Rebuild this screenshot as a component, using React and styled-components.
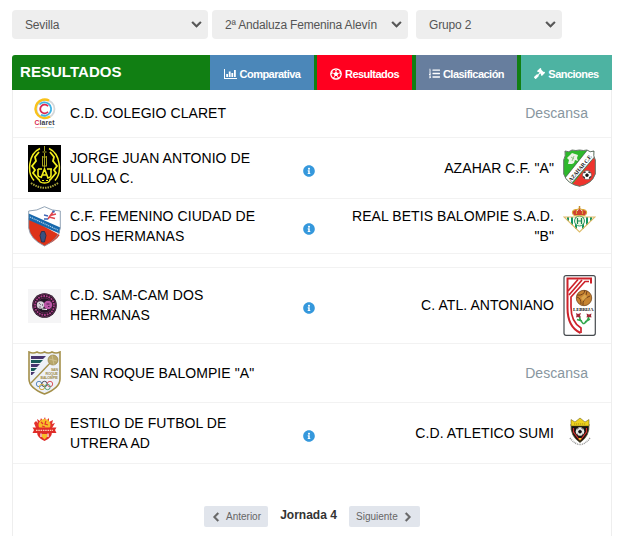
import styled, { createGlobalStyle } from "styled-components";
import {
  FaChevronDown,
  FaChevronLeft,
  FaChevronRight,
  FaGavel,
  FaInfoCircle,
  FaListOl,
} from "react-icons/fa";

const Claret = () => (
  <svg width="33" height="31" viewBox="0 0 33 31">
    <circle cx="17.5" cy="11" r="9" fill="none" stroke="#d5d8da" strokeWidth="1.8" />
    <path
      d="M21 2.5A9.3 9.3 0 1 0 22 18.5"
      fill="none"
      stroke="#f9c21b"
      strokeWidth="2.4"
    />
    <path d="M11.5 6.5A6.7 6.7 0 1 1 13 16.8" fill="none" stroke="#3fb4e5" strokeWidth="1.8" />
    <path d="M20 8.2A4.4 4.4 0 1 0 20 13.8" fill="none" stroke="#d92b51" strokeWidth="1.8" />
    <text x="6.5" y="27" fontSize="6.8" fontWeight="bold" textLength="20" fill="#3c3c46">
      <tspan fill="#d92b51">C</tspan>laret
    </text>
    <path d="M7 29.6h5" stroke="#f3b9c2" />
    <path d="M12 29.6h7" stroke="#f8dc9a" />
    <path d="M19 29.6h7" stroke="#b5d9e9" />
  </svg>
);

const JorgeJuan = () => (
  <svg width="33" height="47" viewBox="0 0 33 47">
    <rect width="33" height="47" fill="#000" />
    <g fill="none" stroke="#f2ee1c">
      <path d="M12 3.500C0 9-1 28 6 35.500M21 3.500c12 5.500 13 24.500 6 32" strokeWidth="1.500" />
      <path
        d="M11 7l-4 5 1 4-4 5 3 4-2 3 6 7M22 7l4 5-1 4 4 5-3 4 2 3-6 7"
        strokeWidth="1.800"
      />
      <path d="M10 24v6q0 2 3 2M10 24h4M23 24v6q0 3-4 3M19 24h5M13 33l3.500-9 3.500 9M14.500 30h4" strokeWidth="1.600" />
      <path d="M11 34q0 4 5.500 4t5.500-4" strokeWidth="1.300" />
    </g>
    <path d="M16.500 1v5M14.500 7h4M14.500 11v10M16.500 8v14M18.500 11v10M14 12h5M14 21h5" stroke="#a9a61f" fill="none" />
    <path d="M14 35.500h2M18 35.500h2" stroke="#f2ee1c" />
    <path
      d="M3 38q13.5 9.500 27 0"
      fill="none"
      stroke="#aaa53a"
      strokeWidth="2"
      strokeDasharray="1.500 1"
    />
  </svg>
);

const DosHermanas = () => (
  <svg width="33" height="41" viewBox="0 0 33 41">
    <path d="M.7 5Q9 5 16.5.7 24 5 32.3 5v17Q31 33 16.5 40 2 33 .7 22z" fill="#fff" />
    <path d="M.7 12l31 17Q28 35 16.5 40 2 33 .7 22z" fill="#dd3319" />
    <path d="M.7 7.500L32.300 21.500 31.500 27.500.7 14z" fill="#1769ad" />
    <path d="M2 11l28 13" stroke="#b4d2eb" strokeWidth="1.200" strokeDasharray="1.200 .8" />
    <path d="M25 6l-3 4-2 3M22 9.500l6-1.500M21 11l6 1.500" stroke="#e0464d" strokeWidth="1.600" fill="none" />
    <path d="M20 10l-4-1M20 13l-4 0" stroke="#3e65b5" strokeWidth="1.300" fill="none" />
    <circle cx="25.500" cy="5.500" r="1.300" fill="#4267b8" />
    <path d="M13.500 25.500h3l1.500 4-1.500 6.500h-3L12 29.500z" fill="#38517f" stroke="#1c2b49" strokeWidth=".8" />
    <path
      d="M.7 5Q9 5 16.5.7 24 5 32.3 5v17Q31 33 16.5 40 2 33 .7 22z"
      fill="none"
      stroke="#8499ad"
      strokeWidth=".9"
    />
  </svg>
);

const SamCam = () => (
  <svg width="33" height="34" viewBox="0 0 33 34">
    <rect width="33" height="34" fill="#f5f5f6" />
    <circle cx="16.500" cy="16.500" r="12.300" fill="#1d1420" />
    <circle cx="16.500" cy="16.500" r="11.500" fill="none" stroke="#74305f" strokeWidth=".8" />
    <circle
      cx="16.500"
      cy="16.500"
      r="9.500"
      fill="none"
      stroke="#b23f8d"
      strokeWidth="1.800"
      strokeDasharray="1.800 .9"
    />
    <circle cx="16.500" cy="16.500" r="7.600" fill="#241727" stroke="#8c3a75" strokeWidth=".6" />
    <circle cx="12.500" cy="16" r="3.700" fill="#d7d3da" />
    <path d="M11 14l2 2M14.500 15v2M11 18h2" stroke="#66606d" strokeWidth=".8" />
    <circle cx="20" cy="16" r="4.200" fill="#bd57a8" />
    <path d="M18.500 15h3M20 17.500h1.500" stroke="#4b2550" />
    <path d="M14 20l5 .5" stroke="#fff" />
  </svg>
);

const SanRoque = () => (
  <svg width="33" height="44" viewBox="0 0 33 44">
    <path
      d="M1 1q4 2 8 0 3.500 2 7.500 0 4 2 7.500 0 4 2 8 0v27q0 9-15.500 15Q1 37 1 28z"
      fill="#eef1f7"
      stroke="#a4904a"
      strokeWidth="1.600"
    />
    <path d="M3 5h15l-3 3H3zM3 13h9l-3 3H3zM3 21h4l-3 3H3z" fill="#48356f" />
    <path d="M3 9h12l-3 3H3zM3 17h6l-3 3H3z" fill="#175c59" />
    <path d="M25 9L3 32" stroke="#a4904a" strokeWidth="1.400" />
    <circle cx="25" cy="9" r="5" fill="#b7a66b" stroke="#958243" strokeWidth=".7" />
    <path d="M21 8l8 2M24 4l2 10" stroke="#d8cda1" strokeWidth=".6" />
    <g fontSize="3.600" fontWeight="bold" fill="#a08b49">
      <text x="23" y="19.500" textLength="7">SAN</text>
      <text x="17.500" y="23.700" textLength="12.500">ROQUE</text>
      <text x="12.500" y="27.900" textLength="17.500">BALOMPIE</text>
    </g>
    <g fill="none" strokeWidth="1">
      <circle cx="11" cy="33" r="2.700" stroke="#5b8abd" />
      <circle cx="16.500" cy="33" r="2.700" stroke="#4e4e57" />
      <circle cx="22" cy="33" r="2.700" stroke="#da5861" />
      <circle cx="14" cy="36" r="2.700" stroke="#d2ac43" />
      <circle cx="19.500" cy="36" r="2.700" stroke="#58a27b" />
    </g>
  </svg>
);

const Utrera = () => (
  <svg width="33" height="33" viewBox="0 0 33 33">
    <path d="M6 6l2-2 2 2-1-4 3 2 1-3 2 3 2-4 1 4 3-3 0 4 4-2-1 4 3-1-3 5H8z" fill="#e4322d" />
    <circle cx="16.500" cy="8" r="6" fill="#f7bd29" />
    <path d="M13 5l2 2M18 4l-1 3 3 1M14 9l3 1" stroke="#e4322d" strokeWidth="1.200" fill="none" />
    <path d="M9 15h15q0 6-7.500 9Q9 21 9 15z" fill="#df2c29" />
    <path d="M13 16.500v3.500M20 16.500v3.500" stroke="#fff" strokeWidth="1.200" />
    <path d="M4.500 10.500h24L27 13l1.500 3h-24L6 13z" fill="#df2c29" />
    <path d="M8 13.300h17" stroke="#ffd1b5" strokeWidth="1.300" strokeDasharray="1.500 .8" />
    <path d="M14 17h5v3l-2.500 2.500L14 20z" fill="#f7bd29" />
  </svg>
);

const Azahar = () => (
  <svg width="33" height="38" viewBox="0 0 33 38">
    <clipPath id="azahar">
      <path d="M2 2q4 2 7-1 4 1 7.500 0 4 1 7.500 0 3 3 7 1-1 5 1.300 9V25Q29 35 16.500 37.300 4 35 .7 25V11Q3 7 2 2z" />
    </clipPath>
    <g clipPath="url(#azahar)">
      <rect width="33" height="38" fill="#2eb82b" />
      <path d="M33 6v32H7z" fill="#ee342d" />
      <path d="M26-1L2 29l6 6L34 5z" fill="#fff" stroke="#343f3a" strokeWidth=".6" />
      <text
        x="8"
        y="33"
        fontSize="5.500"
        fontFamily="Liberation Serif, serif"
        fontWeight="bold"
        textLength="33"
        transform="rotate(-50 8 33)"
        fill="#222"
      >
        AZAHAR C.F.
      </text>
    </g>
    <path d="M6 7l3-3 3 1 3 1-1 3 1 3-3-1-1 3-2 1-4 0 1-4-2-2z" fill="#edf3e6" />
    <path d="M8 8l3 2M11 7l-2 5" stroke="#6fae62" strokeWidth=".7" />
    <circle cx="24" cy="26" r="4.500" fill="#fff" stroke="#444" strokeWidth=".5" />
    <path
      d="M24 24.500l1.600 1.200-.6 1.800h-2l-.6-1.800zM20.500 24l1.500-1.500.5 1zM27.500 24L26 22.500l-.5 1zM20 27.500l1.500.5v1.500zM28 27.500l-1.500.5v1.500z"
      fill="#111"
      stroke="#111"
      strokeWidth=".5"
    />
    <path
      d="M2 2q4 2 7-1 4 1 7.500 0 4 1 7.500 0 3 3 7 1-1 5 1.300 9V25Q29 35 16.500 37.300 4 35 .7 25V11Q3 7 2 2z"
      fill="none"
      stroke="#68736b"
    />
  </svg>
);

const Betis = () => (
  <svg width="33" height="40" viewBox="0 0 33 40">
    <path d="M1 11h31L16.500 26z" fill="#fff" />
    <path
      d="M5 11v4M9 11v8M13 11v12M20 11v12M24 11v8M28 11v4"
      stroke="#159562"
      strokeWidth="2"
    />
    <path d="M1 11h31L16.500 26z" fill="none" stroke="#dfbc6a" strokeWidth="1.200" />
    <circle cx="16.500" cy="15" r="5" fill="#edf5df" stroke="#339b65" />
    <path d="M14.500 12v6M18.500 12v6M14.500 15h4" stroke="#198955" strokeWidth="1.200" />
    <path d="M10.500 9L9.500 5.500l3-2 2 1.500 2-3 2 3 2-1.500 3 2-1 3.500z" fill="#cf3f30" />
    <path
      d="M10.500 9.200q6 1.200 12 0M10 8.500q-2-4 2.500-5 2.500.5 4-1.500 1.500 2 4 1.500 4.500 1 2.500 5M13.500 5v3M19.500 5v3"
      fill="none"
      stroke="#d9a937"
      strokeWidth="1.100"
    />
    <path d="M16.500 0v3M15.500 1h2" stroke="#c6912e" />
  </svg>
);

const Antoniano = () => (
  <svg width="33" height="61" viewBox="0 0 33 61">
    <rect x="1" y=".7" width="31.300" height="59.600" rx="2" fill="#fff" stroke="#454a4e" strokeWidth="1.200" />
    <path d="M3.500 3.500H28v5M4.500 4v29q0 19 13 25" fill="none" stroke="#cd232b" strokeWidth="2" />
    <path
      d="M8 32V22L22 6.500h4M8 32q0 15 10 21v5M5 16L15 4.500M6 20L19 5"
      fill="none"
      stroke="#cd232b"
      strokeWidth="1.700"
    />
    <circle cx="21" cy="23" r="7.700" fill="#c78432" stroke="#75451c" strokeWidth=".8" />
    <path
      d="M14 20q7 1 8-5M18 29q0-6-4-7M20 30q-1-6 7-9M19 23l4-3 1-4"
      fill="none"
      stroke="#71421b"
    />
    <path d="M18 23l4-4 2 3-4 4z" fill="#dba54c" />
    <text
      x="10"
      y="35.800"
      fontSize="5"
      fontFamily="Liberation Serif, serif"
      fontWeight="bold"
      textLength="20.500"
      fill="#1b1b1b"
    >
      LEBRIJA
    </text>
    <path
      d="M16 41q1 5 4.500 8M26 41q-1 5-5.500 8M19 46l-5-1.500M22 47l5-3"
      fill="none"
      stroke="#31a64b"
      strokeWidth="1.500"
    />
    <path d="M13 38l2 1 3-1-1 2.500 1 2-3-.5-2 .5.500-2zM23.500 38.500l2.500 1 2.500-1-.5 2 .5 2-2.500-.5-2.500.5.500-2z" fill="#a12a3a" />
  </svg>
);

const Sumi = () => (
  <svg width="33" height="33" viewBox="0 0 33 33">
    <path d="M8 7h18q1 12-9 18.500Q7 19 8 7z" fill="#171411" stroke="#5f5734" strokeWidth=".8" />
    <path d="M8 2.500l4 2.500 5-4 5 4 4-2.500V9H8z" fill="#eed21c" stroke="#5d500f" strokeWidth=".5" />
    <path d="M11 7h12" stroke="#a38b12" strokeWidth="1.200" strokeDasharray="1.200 .8" />
    <path d="M10.500 11v4l6 8M23.500 11v4l-6 8" stroke="#d2302c" strokeWidth="1.200" fill="none" />
    <circle cx="17" cy="14.500" r="4.300" fill="#e7e7e4" />
    <path d="M17 13l1.500 1-.5 2h-2l-.5-2zM14 12l1.500-.500M20 12l-1.500-.500M14 17l1 .5M20 17l-1 .5" fill="#151515" stroke="#151515" strokeWidth=".7" />
    <path d="M15.500 21h3L17 24z" fill="#f0ce26" />
    <path
      d="M7 21q10 13 20 0"
      fill="none"
      stroke="#999"
      strokeWidth="1.500"
      strokeDasharray="1 .8"
    />
  </svg>
);

const BarChartIcon = () => (
  <svg width="13" height="12" viewBox="0 0 13 12" fill="currentColor">
    <path d="M0 1h1v9h12v1H0zM2.200 6H4v3H2.200zM4.800 3.500h1.800V9H4.800zM7.400 5h1.800v4H7.400zM10 2h1.800v7H10z" />
  </svg>
);

const BallIcon = () => (
  <svg width="12" height="12" viewBox="0 0 12 12">
    <circle cx="6" cy="6" r="5.200" fill="none" stroke="currentColor" strokeWidth="1.300" />
    <path d="M6 3.700l2.200 1.600-.8 2.600H4.600l-.8-2.600z" fill="currentColor" />
    <path
      d="M6 4V2.500M8 5.500l2-.5M7.200 8l1.200 1.800M4.800 8L3.600 9.800M4 5.500L2 5"
      fill="none"
      stroke="currentColor"
      strokeWidth=".8"
    />
    <path d="M4 1.200L6 2.500 8 1.200M.8 6L2 5l-.2-2M11.200 6L10 5l.2-2M3 10l.6-.3 2 1M9 10l-.6-.3-2 1" stroke="currentColor" fill="none" />
  </svg>
);

const filters = [
  { value: "Sevilla", width: 196, gap: 4 },
  { value: "2ª Andaluza Femenina Alevín", width: 196, gap: 8 },
  { value: "Grupo 2", width: 146, gap: 0 },
];

const tabs = [
  { label: "Comparativa", icon: <BarChartIcon />, color: "#4b87b9", width: 104, gap: 3 },
  { label: "Resultados", icon: <BallIcon />, color: "#ff001f", width: 95, gap: 4 },
  { label: "Clasificación", icon: <FaListOl />, color: "#677e9e", width: 101, gap: 4 },
  { label: "Sanciones", icon: <FaGavel />, color: "#4db3a2", width: 91, gap: 0 },
];

const matches = [
  { height: 48, home: "C.D. COLEGIO CLARET", homeCrest: <Claret /> },
  {
    height: 61,
    home: "JORGE JUAN ANTONIO DE ULLOA C.",
    homeCrest: <JorgeJuan />,
    away: 'AZAHAR C.F. "A"',
    awayCrest: <Azahar />,
  },
  {
    height: 55,
    home: "C.F. FEMENINO CIUDAD DE DOS HERMANAS",
    homeCrest: <DosHermanas />,
    away: 'REAL BETIS BALOMPIE S.A.D. "B"',
    awayCrest: <Betis />,
  },
  { height: 14 },
  {
    height: 76,
    home: "C.D. SAM-CAM DOS HERMANAS",
    homeCrest: <SamCam />,
    away: "C. ATL. ANTONIANO",
    awayCrest: <Antoniano />,
  },
  { height: 59, home: 'SAN ROQUE BALOMPIE "A"', homeCrest: <SanRoque /> },
  {
    height: 61,
    home: "ESTILO DE FUTBOL DE UTRERA AD",
    homeCrest: <Utrera />,
    away: "C.D. ATLETICO SUMI",
    awayCrest: <Sumi />,
  },
];

const Match = ({ match }) => {
  if (!match.home) return <Row $height={match.height} />;

  return (
    <Row $height={match.height}>
      <Crest>{match.homeCrest}</Crest>
      <Team>{match.home}</Team>
      {match.away ? (
        <>
          <Info>
            <FaInfoCircle />
          </Info>
          <Team $away>{match.away}</Team>
          <Crest>{match.awayCrest}</Crest>
        </>
      ) : (
        <Rest>Descansa</Rest>
      )}
    </Row>
  );
};

const App = () => {
  return (
    <>
      <GlobalStyle />
      <Page>
        <Filters>
          {filters.map((filter) => (
            <SelectBox key={filter.value} $width={filter.width} $gap={filter.gap}>
              <Select defaultValue={filter.value}>
                <option>{filter.value}</option>
              </Select>
              <FaChevronDown />
            </SelectBox>
          ))}
        </Filters>
        <Header>
          <Title>RESULTADOS</Title>
          <Tabs>
            {tabs.map((tab) => (
              <Tab key={tab.label} $color={tab.color} $width={tab.width} $gap={tab.gap}>
                {tab.icon}
                <span>{tab.label}</span>
              </Tab>
            ))}
          </Tabs>
        </Header>
        <Results>
          {matches.map((match, index) => (
            <Match key={index} match={match} />
          ))}
          <Pager>
            <PageButton $width={64}>
              <FaChevronLeft />
              Anterior
            </PageButton>
            <Round>Jornada 4</Round>
            <PageButton $width={71}>
              Siguiente
              <FaChevronRight />
            </PageButton>
          </Pager>
        </Results>
      </Page>
    </>
  );
};

export default App;

const GlobalStyle = createGlobalStyle`
  * {
    box-sizing: border-box;
  }
  body {
    margin: 0;
    background: #fff;
    overflow: hidden;
    font-family: "Liberation Sans", Arial, sans-serif;
  }
`;

const Page = styled.div`
  width: 625px;
  height: 536px;
  padding: 10px 13px 0 12px;
  display: flex;
  flex-direction: column;
  overflow: hidden;
`;

const Filters = styled.div`
  display: flex;
  height: 29px;
  margin-bottom: 16px;
`;

const SelectBox = styled.label`
  display: flex;
  align-items: center;
  width: ${(props) => props.$width}px;
  margin-right: ${(props) => props.$gap}px;
  padding: 0 6px 0 13px;
  border-radius: 4px;
  background: #eee;
  color: #555;

  svg {
    flex: none;
    width: 11px;
    height: 11px;
    stroke: currentColor;
    stroke-width: 22px;
  }
`;

const Select = styled.select`
  flex: 1;
  min-width: 0;
  padding: 0;
  border: 0;
  appearance: none;
  background: none;
  color: #555;
  font: 12px "Liberation Sans", Arial, sans-serif;
  letter-spacing: -0.17px;
`;

const Header = styled.div`
  flex: none;
  display: flex;
  justify-content: space-between;
  width: 600px;
  height: 35px;
  background: #117f13;
  border-radius: 3px 0 0 0;
`;

const Title = styled.h1`
  margin: 0;
  padding-left: 8px;
  color: #fff;
  font-size: 15px;
  line-height: 34px;
  letter-spacing: 0.05px;
`;

const Tabs = styled.div`
  display: flex;
`;

const Tab = styled.button`
  display: flex;
  align-items: center;
  justify-content: center;
  gap: 3px;
  width: ${(props) => props.$width}px;
  margin: 0 ${(props) => props.$gap}px 0 0;
  padding: 2px 0 0;
  border: 0;
  background: ${(props) => props.$color};
  color: #fff;
  font: bold 11px "Liberation Sans", Arial, sans-serif;
  letter-spacing: -0.52px;

  svg {
    flex: none;
  }
`;

const Results = styled.div`
  flex: 1;
  width: 600px;
  border: solid #eee;
  border-width: 0 1px;
`;

const Row = styled.div`
  display: grid;
  grid-template-columns: 33px 200px 60px 206px 33px;
  column-gap: 9px;
  align-items: center;
  height: ${(props) => props.$height}px;
  padding: 0 15px;
  border-bottom: 1px solid #f2f2f2;
`;

const Crest = styled.div`
  display: flex;
`;

const Team = styled.div`
  margin-top: -0.5px;
  color: #000;
  font-size: 14px;
  line-height: 20px;
  letter-spacing: 0.07px;
  text-align: ${(props) => (props.$away ? "right" : "left")};
`;

const Info = styled.div`
  display: flex;
  justify-content: center;
  margin-top: -0.5px;
  padding-top: 6px;
  color: #3598dc;
  font-size: 12px;
`;

const Rest = styled.div`
  grid-column: 4 / 6;
  margin-top: -0.5px;
  padding-right: 8px;
  color: #8896a0;
  font-size: 14px;
  line-height: 20px;
  letter-spacing: 0.07px;
  text-align: right;
`;

const Pager = styled.div`
  display: flex;
  align-items: center;
  padding: 42px 0 0 191px;
`;

const PageButton = styled.button`
  display: flex;
  align-items: center;
  justify-content: space-between;
  width: ${(props) => props.$width}px;
  height: 21px;
  padding: 0 7px;
  border: 0;
  border-radius: 2px;
  background: #e1e5ec;
  color: #666;
  font: 10px "Liberation Sans", Arial, sans-serif;

  svg {
    stroke: currentColor;
    stroke-width: 30px;
  }
`;

const Round = styled.strong`
  width: 81px;
  padding-bottom: 3px;
  color: #333;
  font-size: 12px;
  text-align: center;
`;
